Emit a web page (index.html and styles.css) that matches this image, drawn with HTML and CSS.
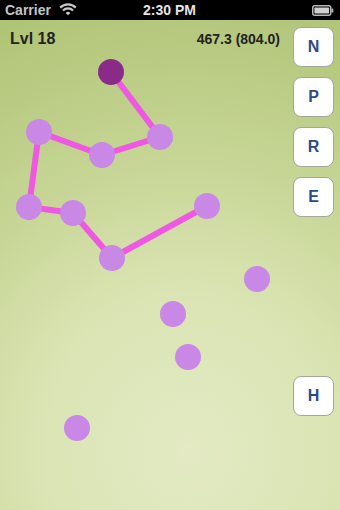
FILE: index.html
```html
<!DOCTYPE html>
<html>
<head>
<meta charset="utf-8">
<link rel="stylesheet" href="styles.css">
</head>
<body>
<div class="screen">
  <div class="statusbar">
    <div class="sb-left">
      <span class="carrier">Carrier</span>
      <svg class="wifi" width="18" height="13" viewBox="0 0 18 13">
        <path d="M1.2 4.6 A11 11 0 0 1 16.8 4.6" fill="none" stroke="#c8c8c8" stroke-width="2.2"/>
        <path d="M4 7.4 A7 7 0 0 1 14 7.4" fill="none" stroke="#c8c8c8" stroke-width="2.2"/>
        <path d="M9 12.2 L6.6 9.9 A3.4 3.4 0 0 1 11.4 9.9 Z" fill="#c8c8c8"/>
      </svg>
    </div>
    <span class="time">2:30 PM</span>
    <div class="sb-right">
      <svg class="battery" width="22" height="11" viewBox="0 0 22 11">
        <rect x="0.75" y="0.75" width="18" height="9.5" rx="2" fill="none" stroke="#b8b8b8" stroke-width="1.5"/>
        <rect x="2.4" y="2.4" width="14.7" height="6.2" rx="0.8" fill="#d0d0d0"/>
        <rect x="19.5" y="3.5" width="1.8" height="4" rx="0.6" fill="#b8b8b8"/>
      </svg>
    </div>
  </div>
  <div class="board">
    <svg class="canvas" width="340" height="490" viewBox="0 0 340 490">
      <polyline points="111,52 160,117 102,135 39,112 29,187 73,193 112,238 207,186" fill="none" stroke="#ef58e2" stroke-width="6" stroke-linejoin="round"/>
      <g fill="#c987e6">
        <circle cx="160" cy="117" r="13"/>
        <circle cx="102" cy="135" r="13"/>
        <circle cx="39" cy="112" r="13"/>
        <circle cx="29" cy="187" r="13"/>
        <circle cx="73" cy="193" r="13"/>
        <circle cx="112" cy="238" r="13"/>
        <circle cx="207" cy="186" r="13"/>
        <circle cx="257" cy="259" r="13"/>
        <circle cx="173" cy="294" r="13"/>
        <circle cx="188" cy="337" r="13"/>
        <circle cx="77" cy="408" r="13"/>
      </g>
      <circle cx="111" cy="52" r="13" fill="#8b2b89"/>
    </svg>
    <div class="hud">
      <span class="level">Lvl 18</span>
      <span class="score">467.3 (804.0)</span>
    </div>
    <div class="controls">
      <button class="btn">N</button>
      <button class="btn">P</button>
      <button class="btn">R</button>
      <button class="btn">E</button>
      <button class="btn btn-h">H</button>
    </div>
  </div>
</div>
</body>
</html>
```
FILE: styles.css
```css
html, body {
  margin: 0;
  padding: 0;
  background: #000;
}
.screen {
  width: 340px;
  height: 510px;
  overflow: hidden;
  font-family: "Liberation Sans", Arial, sans-serif;
}
.statusbar {
  height: 20px;
  background: #000;
  display: flex;
  align-items: center;
  justify-content: space-between;
  padding: 0 6px 0 5px;
  box-sizing: border-box;
  position: relative;
}
.sb-left {
  display: flex;
  align-items: center;
  gap: 8px;
  width: 90px;
}
.carrier {
  color: #c4c4c4;
  font-size: 14px;
  font-weight: bold;
  line-height: 20px;
}
.wifi {
  display: block;
  margin-top: -1px;
}
.time {
  color: #e4e4e4;
  font-size: 14px;
  font-weight: bold;
  line-height: 20px;
}
.sb-right {
  width: 90px;
  display: flex;
  justify-content: flex-end;
}
.battery {
  display: block;
}
.board {
  position: relative;
  height: 490px;
  display: flex;
  background: radial-gradient(ellipse 130% 95% at 55% 88%, #e3eac4 0%, #dae4b3 35%, #c7d696 62%, #b0c476 100%);
}
.canvas {
  position: absolute;
  left: 0;
  top: 0;
}
.hud {
  position: relative;
  flex: 1;
  display: flex;
  justify-content: space-between;
  align-items: baseline;
  align-self: flex-start;
  padding: 10px 13px 0 10px;
  color: #222;
  font-weight: bold;
  line-height: 18px;
}
.level {
  font-size: 16px;
}
.score {
  font-size: 14px;
}
.controls {
  position: relative;
  display: flex;
  flex-direction: column;
  gap: 10px;
  padding: 7px 6px 0 0;
}
.btn {
  width: 41px;
  height: 40px;
  margin: 0;
  padding: 0;
  box-sizing: border-box;
  background: #fff;
  border: 1px solid #a3a89a;
  border-radius: 8px;
  color: #2c4a8a;
  font-family: "Liberation Sans", Arial, sans-serif;
  font-weight: bold;
  font-size: 16px;
  line-height: 38px;
  text-align: center;
}
.btn-h {
  margin-top: 149px;
}
```
